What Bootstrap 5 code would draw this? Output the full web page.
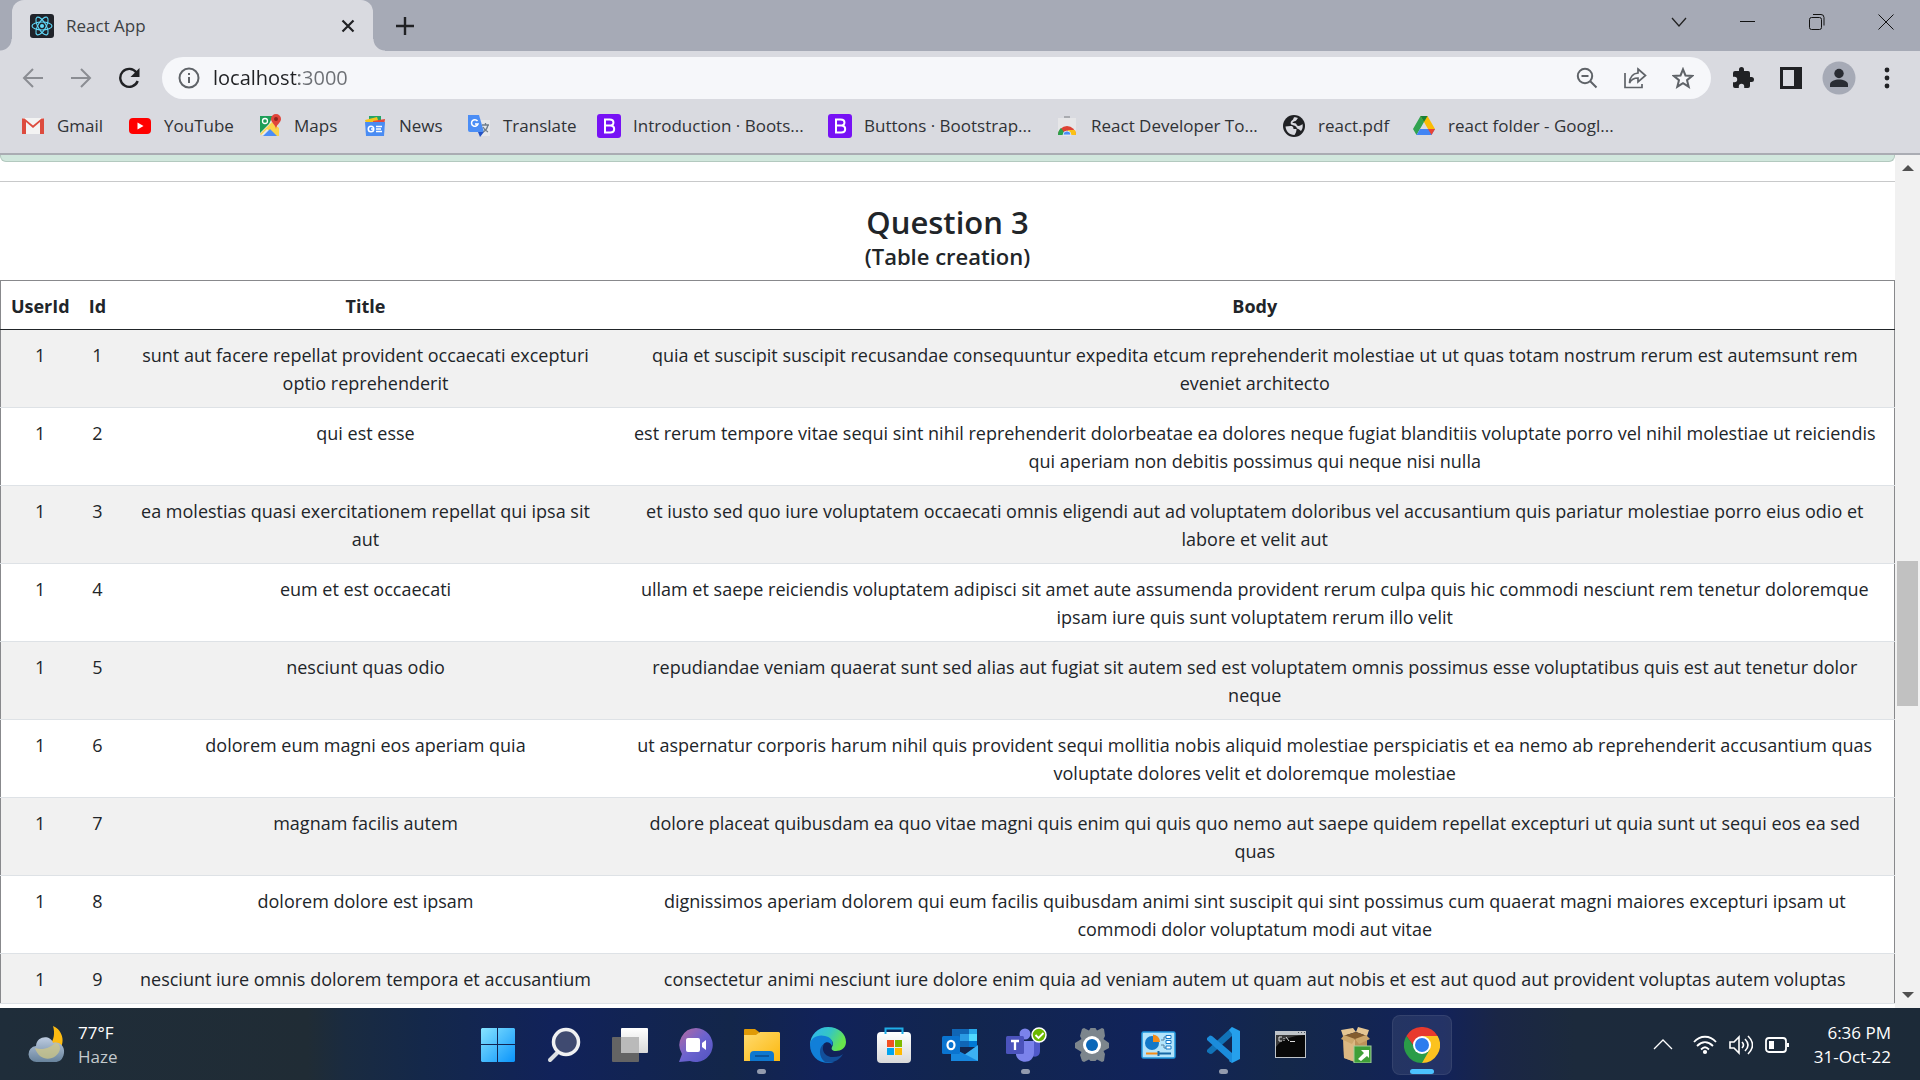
<!DOCTYPE html>
<html lang="en">
<head>
<meta charset="utf-8">
<meta name="viewport" content="width=device-width, initial-scale=1">
<title>React App</title>
<link href="https://cdn.jsdelivr.net/npm/bootstrap@5.3.0/dist/css/bootstrap.min.css" rel="stylesheet">
<style>
  body { font-family: "Open Sans", "Noto Sans", sans-serif; font-size: 18px; color: #212529; }
  svg { display: block; flex: none; }
  button { color: inherit; }
  .icon-btn { border: 0; background: none; padding: 0; display: flex; align-items: center; justify-content: center; flex: none; }

  /* tab strip */
  .tab-strip { background: #a6aab6; height: 51px; padding-left: 12px; }
  .browser-tab { background: #d9dae0; width: 361px; border-radius: 12px 12px 0 0; padding: 0 13px 0 18px; gap: 12px; font-size: 17px; position: relative; color: #3c4043; }
  .browser-tab::before, .browser-tab::after { content: ""; position: absolute; bottom: 0; width: 12px; height: 12px; }
  .browser-tab::before { left: -12px; background: radial-gradient(circle at 0 0, transparent 11px, #d9dae0 12px); }
  .browser-tab::after { right: -12px; background: radial-gradient(circle at 100% 0, transparent 11px, #d9dae0 12px); }
  .win-btn { width: 69px; height: 44px; }

  /* toolbar */
  .chrome-bar { background: #d9dae0; }
  .tool-row { height: 54px; padding: 0 9px; }
  .nav-btn { width: 48px; height: 42px; }
  .address { background: #f6f7fa; height: 42px; border-radius: 21px; margin: 0 8px 0 9px; padding: 0 4px 0 16px; }
  .address-input { border: 0; outline: 0; font-size: 20px; line-height: 30px; padding: 0; margin-left: 13px; color: transparent; background: linear-gradient(to right, #202124 86px, #6c6f74 86px); -webkit-background-clip: text; background-clip: text; }
  .ext-btn { width: 48px; height: 42px; }
  .bookmarks { display: grid; grid-template-columns: 107px 130px 105px 104px 130px 231px 227px 227px 130px auto 1fr; height: 50px; padding: 0 0 6px 21px; border-bottom: 2px solid #aaacb3; align-items: center; font-size: 17px; }
  .bookmarks a { display: flex; align-items: center; gap: 12px; color: #303236; text-decoration: none; white-space: nowrap; }

  /* page */
  .page-body { min-height: 0; }
  .prev-alert { height: 7px; background: #d1e7dd; border: 1px solid #b3c9bf; border-top: 0; border-radius: 0 0 6px 6px; }
  .rule { border-top: 1px solid #c8c9ca; margin-top: 19px; }
  .q-title { font-size: 31px; line-height: 39px; font-weight: 600; margin: 21px 0 0; }
  .q-sub { font-size: 22px; line-height: 28px; font-weight: 600; margin: 0 0 10px; }
  .posts { border: 1px solid #88898c; table-layout: fixed; margin: 0; text-align: center; color: #212529; line-height: 28px; }
  .posts > :not(caption) > * > * { padding: 11px 12px 10px; border-bottom: 1px solid #dee2e6; }
  .posts > :not(caption) > * > :nth-child(-n+2) { padding-left: 8px; padding-right: 8px; }
  .posts > tbody > tr:nth-child(odd) > * { background: #f1f1f1; box-shadow: none; }
  .posts > thead > tr > th { border-bottom-color: #212529; padding-bottom: 9px; }
  .c-user { width: 79px; } .c-id { width: 36px; } .c-title { width: 500px; }

  /* scrollbar */
  .scroller { width: 25px; background: #f1f1f1; }
  .scroller .arrow { height: 26px; width: 25px; }
  .scroller .thumb { width: 21px; background: #c1c1c1; flex: 145; }
  .track-above { flex: 380; }
  .track-below { flex: 276; }

  /* taskbar */
  .taskbar { height: 72px; padding-top: 2px; color: #fff; font-size: 17px; line-height: 24px; background: linear-gradient(to right, #1f2d3a 0, #202c35 16%, #1a2b40 18%, #14284a 22%, #11225a 29%, #13264a 38%, #11225a 43%, #12264e 50%, #11235a 60%, #14284a 67%, #12225a 75%, #1a2646 78%, #1c2a3c 82%, #1c2a38 100%); }
  .task-side { flex: 1 1 0; gap: 12px; }
  .task-left { padding-left: 28px; }
  .task-right { padding-right: 29px; }
  .task-apps { gap: 6px; }
  .clock { padding-left: 13px; }
  .haze { color: #c3c9cd; }
  .task-btn { width: 60px; height: 60px; border-radius: 8px; position: relative; }
  .task-btn.current { background: rgba(255,255,255,.08); border: 1px solid rgba(255,255,255,.07); }
  .task-btn.running::after, .task-btn.current::after { content: ""; position: absolute; bottom: 1px; width: 9px; height: 5px; border-radius: 3px; background: #939bae; }
  .task-btn.current::after { width: 24px; background: #4cc2ff; bottom: 0; }
</style>
</head>
<body class="vh-100 d-flex flex-column overflow-hidden">

<header>
  <div class="tab-strip d-flex align-items-stretch">
    <div class="browser-tab d-flex align-items-center">
      <svg width="24" height="24" viewBox="0 0 24 24"><rect width="24" height="24" rx="3" fill="#20232a"/><g fill="none" stroke="#61dafb" stroke-width="1.1"><ellipse cx="12" cy="12" rx="10" ry="4"/><ellipse cx="12" cy="12" rx="10" ry="4" transform="rotate(60 12 12)"/><ellipse cx="12" cy="12" rx="10" ry="4" transform="rotate(120 12 12)"/></g><circle cx="12" cy="12" r="2" fill="#61dafb"/></svg>
      <span class="flex-grow-1">React App</span>
      <button class="icon-btn" aria-label="Close tab"><svg width="24" height="24" viewBox="0 0 24 24" stroke="#202124" stroke-width="2.2"><path d="M6.500 6.500l11 11M17.500 6.500l-11 11"/></svg></button>
    </div>
    <button class="icon-btn ms-3 px-1" aria-label="New tab"><svg width="24" height="24" viewBox="0 0 24 24" stroke="#202124" stroke-width="2.400"><path d="M12 3v18M3 12h18"/></svg></button>
    <div class="ms-auto d-flex">
      <button class="icon-btn win-btn" aria-label="Search tabs"><svg width="18" height="18" viewBox="0 0 18 18" fill="none" stroke="#222" stroke-width="1.300"><path d="M2 5l7 8 7-8"/></svg></button>
      <button class="icon-btn win-btn" aria-label="Minimize"><svg width="16" height="16" viewBox="0 0 16 16" stroke="#111"><path d="M0 7.500h15"/></svg></button>
      <button class="icon-btn win-btn" aria-label="Restore"><svg width="16" height="16" viewBox="0 0 16 16" fill="none" stroke="#111"><rect x=".5" y="3.500" width="12" height="12" rx="2"/><path d="M4 .5h8a3 3 0 0 1 3 3v8"/></svg></button>
      <button class="icon-btn win-btn" aria-label="Close"><svg width="16" height="16" viewBox="0 0 16 16" stroke="#111"><path d="M.5 .5l15 15M15.500 .5l-15 15"/></svg></button>
    </div>
  </div>

  <div class="chrome-bar">
    <div class="tool-row d-flex align-items-center">
      <button class="icon-btn nav-btn" aria-label="Back"><svg width="22" height="22" viewBox="0 0 22 22" fill="none" stroke="#8b8d93" stroke-width="2"><path d="M21 11H3M11 2l-9 9 9 9"/></svg></button>
      <button class="icon-btn nav-btn" aria-label="Forward"><svg width="22" height="22" viewBox="0 0 22 22" fill="none" stroke="#8b8d93" stroke-width="2"><path d="M1 11h18M11 2l9 9-9 9"/></svg></button>
      <button class="icon-btn nav-btn" aria-label="Reload"><svg width="22" height="22" viewBox="0 0 22 22" fill="none" stroke="#202124" stroke-width="2.400"><path d="M18.500 5.500A9 9 0 1 0 19.700 14"/><path d="M21.500 1v9h-9z" fill="#202124" stroke="none"/></svg></button>
      <form class="address d-flex align-items-center flex-grow-1" onsubmit="return false">
        <svg width="22" height="22" viewBox="0 0 22 22" fill="none" stroke="#5f6368" stroke-width="2"><circle cx="11" cy="11" r="9.500"/><path d="M11 10v6M11 6v2"/></svg>
        <input id="url" class="address-input flex-grow-1" type="text" value="localhost:3000" aria-label="Address">
        <button class="icon-btn nav-btn" aria-label="Zoom"><svg width="22" height="22" viewBox="0 0 22 22" fill="none" stroke="#5f6368" stroke-width="2"><circle cx="9" cy="9" r="7.200"/><path d="M14 14l6.500 6.500M5.500 9h7"/></svg></button>
        <button class="icon-btn nav-btn" aria-label="Share"><svg width="24" height="22" viewBox="0 0 24 22" fill="none" stroke="#5f6368" stroke-width="1.700"><path d="M2 6v14.500h17V17"/><path d="M15 2l7.500 6.500L15 15v-4c-4 0-6.500 1-8.500 5 .3-6 3.500-9.500 8.500-10z"/></svg></button>
        <button class="icon-btn nav-btn" aria-label="Bookmark this tab"><svg width="22" height="22" viewBox="0 0 24 24" fill="none" stroke="#5f6368" stroke-width="2.200"><path d="M12 2.500l2.700 6.700 7.300.5-5.600 4.700 1.800 7.100-6.200-3.900-6.200 3.900 1.800-7.100L2 9.700l7.300-.5z"/></svg></button>
      </form>
      <button class="icon-btn ext-btn" aria-label="Extensions"><svg width="24" height="24" viewBox="0 0 24 24" fill="#202124"><path d="M20.500 11H19V7a2 2 0 0 0-2-2h-4V3.500a2.500 2.500 0 0 0-5 0V5H4a2 2 0 0 0-2 2v3.800h1.500a2.700 2.700 0 0 1 0 5.400H2V20a2 2 0 0 0 2 2h3.800v-1.500a2.700 2.700 0 0 1 5.400 0V22H17a2 2 0 0 0 2-2v-4h1.500a2.500 2.500 0 0 0 0-5z"/></svg></button>
      <button class="icon-btn ext-btn" aria-label="Side panel"><svg width="22" height="22" viewBox="0 0 22 22"><path fill="#202124" fill-rule="evenodd" d="M0 0h22v22H0zM3 3v16h11V3z"/></svg></button>
      <button class="icon-btn ext-btn" aria-label="Profile"><svg width="34" height="34" viewBox="0 0 34 34"><circle cx="17" cy="17" r="16.500" fill="#a6aab6"/><g fill="#292c33"><circle cx="17" cy="12.500" r="4.700"/><path d="M8 26v-2.500c0-3.500 5-5 9-5s9 1.500 9 5V26z"/></g></svg></button>
      <button class="icon-btn ext-btn" aria-label="Menu"><svg width="6" height="22" viewBox="0 0 6 22" fill="#202124"><circle cx="3" cy="3" r="2.400"/><circle cx="3" cy="11" r="2.400"/><circle cx="3" cy="19" r="2.400"/></svg></button>
    </div>

    <nav class="bookmarks" aria-label="Bookmarks">
      <a href="#"><svg width="24" height="24" viewBox="0 0 24 24"><path d="M2 4h20v16H2z" fill="#f3f3f3"/><path d="M1 4.500V20h4V8l7 6 7-6v12h4V4.500h-2.500L12 11.500 3.500 4.500z" fill="#dd4b3e"/></svg>Gmail</a>
      <a href="#"><svg width="24" height="24" viewBox="0 0 24 24"><rect x="1" y="4" width="22" height="16" rx="4" fill="#f00"/><path d="M9.500 8.500v7l6-3.500z" fill="#fff"/></svg>YouTube</a>
      <a href="#"><svg width="24" height="24" viewBox="0 0 24 24"><path d="M3 3h17v18H3z" fill="#e8e8e8"/><path d="M2 2h13l-4 8-9 9z" fill="#1e9e58"/><path d="M2 20L14 8l7 6v8h-4l-8-7-6 6z" fill="#fbd44b"/><path d="M5 22l7-7 7 7z" fill="#4b8df8"/><path d="M18 0a5 5 0 0 0-5 5c0 4 4.500 5 5 10 .5-5 5-6 5-10a5 5 0 0 0-5-5z" fill="#e0443a"/><circle cx="18" cy="5" r="2" fill="#8d241c"/><circle cx="7" cy="7" r="2.500" fill="none" stroke="#fff" stroke-width="1.300"/></svg>Maps</a>
      <a href="#"><svg width="24" height="24" viewBox="0 0 24 24"><path d="M6 2h12v7H6z" fill="#23a566"/><path d="M2 6l12-3 2 6H3z" fill="#f6c51b"/><path d="M10 7l12-2-1 7H10z" fill="#e04a3d"/><path d="M2 8h20l-1 14H3z" fill="#4a8cf3"/><circle cx="8" cy="15" r="2.700" fill="none" stroke="#fff" stroke-width="1.600"/><path d="M8 15h3M13 12.500h6M13 15h5M13 17.500h6" stroke="#fff" stroke-width="1.500"/></svg>News</a>
      <a href="#"><svg width="24" height="24" viewBox="0 0 24 24"><path d="M9 6h14v16H14z" fill="#e6e7ea"/><path d="M1 1h11l5 17H3a2 2 0 0 1-2-2z" fill="#4b8df5"/><path d="M11 18h6l-4 5z" fill="#2352c5"/><path d="M10.500 7A3.300 3.300 0 1 0 11 10H8" fill="none" stroke="#fff" stroke-width="1.500"/><path d="M15 11h7M18.500 9v2M21 11c-1 4-3 6-5 7M16 13c1 2 3 4 5 5" stroke="#6f7d8a" stroke-width="1.300" fill="none"/></svg>Translate</a>
      <a href="#"><svg width="24" height="24" viewBox="0 0 24 24"><rect width="24" height="24" rx="3" fill="#7711f5"/><path d="M8 5.500h4.700c5 0 5 6 0 6H8zm0 6h5.200c5.300 0 5.300 7 0 7H8z" fill="none" stroke="#fff" stroke-width="2"/></svg>Introduction · Boots...</a>
      <a href="#"><svg width="24" height="24" viewBox="0 0 24 24"><rect width="24" height="24" rx="3" fill="#7711f5"/><path d="M8 5.500h4.700c5 0 5 6 0 6H8zm0 6h5.200c5.300 0 5.300 7 0 7H8z" fill="none" stroke="#fff" stroke-width="2"/></svg>Buttons · Bootstrap...</a>
      <a href="#"><svg width="24" height="24" viewBox="0 0 24 24"><path d="M9 2h6v2H9z" fill="#a9abb0"/><path d="M3 4h18v17H3z" fill="#e6e6e8"/><path d="M3 21a9 9 0 0 1 18 0z" fill="#dd4334"/><path d="M3 21a9 9 0 0 1 3-7l5 7z" fill="#2ba24c"/><path d="M21 21a9 9 0 0 0-1-5h-7v5z" fill="#fbc116"/><path d="M8 21a4 4 0 0 1 8 0z" fill="#4b8df5" stroke="#fff" stroke-width=".7"/></svg>React Developer To...</a>
      <a href="#"><svg width="24" height="24" viewBox="0 0 24 24"><circle cx="12" cy="12" r="11" fill="#202124"/><path d="M3.500 12.500l5-.5c3 0 3 2 3 3h3c0 3-1 4-2 6C7 21 4 17 3.500 12.500zM12 3.300c2 0 3 .2 4 .7-1 1-1 2-2.500 3-1.500.5-3 .5-3 2 2 0 4 0 4.500 2.500 2 1 4 0 5.500-1.500.6 3 0 5-1.500 7-1.500-1-2-2-4-2.500-1-3-3-3-6-4-1-3 1-4 2-5z" fill="#d9dae0"/></svg>react.pdf</a>
      <a href="#"><svg width="24" height="24" viewBox="0 0 24 24"><path d="M8.500 2h7L12 8 4.500 21 1 15z" fill="#31a350"/><path d="M8.500 2h7L23 15h-7z" fill="#fbbc04"/><path d="M8.500 2h7L12 8z" fill="#188038"/><path d="M8 15h15l-3.500 6h-15z" fill="#4285f4"/><path d="M16 15h7l-3.500 6z" fill="#ea4335"/></svg>react folder - Googl...</a>
    </nav>
  </div>
</header>

<div class="page-body d-flex flex-grow-1 overflow-hidden">
  <main class="flex-grow-1 overflow-hidden">
    <div class="prev-alert"></div>
    <div class="rule"></div>
    <h3 class="q-title text-center">Question 3</h3>
    <h5 class="q-sub text-center">(Table creation)</h5>
    <table class="table table-striped posts">
      <colgroup><col class="c-user"><col class="c-id"><col class="c-title"><col></colgroup>
      <thead><tr><th scope="col">UserId</th><th scope="col">Id</th><th scope="col">Title</th><th scope="col">Body</th></tr></thead>
      <tbody>
        <tr><td>1</td><td>1</td><td>sunt aut facere repellat provident occaecati excepturi optio reprehenderit</td><td>quia et suscipit suscipit recusandae consequuntur expedita etcum reprehenderit molestiae ut ut quas totam nostrum rerum est autemsunt rem eveniet architecto</td></tr>
        <tr><td>1</td><td>2</td><td>qui est esse</td><td>est rerum tempore vitae sequi sint nihil reprehenderit dolorbeatae ea dolores neque fugiat blanditiis voluptate porro vel nihil molestiae ut reiciendis qui aperiam non debitis possimus qui neque nisi nulla</td></tr>
        <tr><td>1</td><td>3</td><td>ea molestias quasi exercitationem repellat qui ipsa sit aut</td><td>et iusto sed quo iure voluptatem occaecati omnis eligendi aut ad voluptatem doloribus vel accusantium quis pariatur molestiae porro eius odio et labore et velit aut</td></tr>
        <tr><td>1</td><td>4</td><td>eum et est occaecati</td><td>ullam et saepe reiciendis voluptatem adipisci sit amet aute assumenda provident rerum culpa quis hic commodi nesciunt rem tenetur doloremque ipsam iure quis sunt voluptatem rerum illo velit</td></tr>
        <tr><td>1</td><td>5</td><td>nesciunt quas odio</td><td>repudiandae veniam quaerat sunt sed alias aut fugiat sit autem sed est voluptatem omnis possimus esse voluptatibus quis est aut tenetur dolor neque</td></tr>
        <tr><td>1</td><td>6</td><td>dolorem eum magni eos aperiam quia</td><td>ut aspernatur corporis harum nihil quis provident sequi mollitia nobis aliquid molestiae perspiciatis et ea nemo ab reprehenderit accusantium quas voluptate dolores velit et doloremque molestiae</td></tr>
        <tr><td>1</td><td>7</td><td>magnam facilis autem</td><td>dolore placeat quibusdam ea quo vitae magni quis enim qui quis quo nemo aut saepe quidem repellat excepturi ut quia sunt ut sequi eos ea sed quas</td></tr>
        <tr><td>1</td><td>8</td><td>dolorem dolore est ipsam</td><td>dignissimos aperiam dolorem qui eum facilis quibusdam animi sint suscipit qui sint possimus cum quaerat magni maiores excepturi ipsam ut commodi dolor voluptatum modi aut vitae</td></tr>
        <tr><td>1</td><td>9</td><td>nesciunt iure omnis dolorem tempora et accusantium</td><td>consectetur animi nesciunt iure dolore enim quia ad veniam autem ut quam aut nobis et est aut quod aut provident voluptas autem voluptas</td></tr>
      </tbody>
    </table>
  </main>
  <div class="scroller d-flex flex-column align-items-center flex-shrink-0">
    <button class="icon-btn arrow" aria-label="Scroll up"><svg width="12" height="6" viewBox="0 0 12 6" fill="#505050"><path d="M6 0l6 6H0z"/></svg></button>
    <div class="track-above"></div>
    <div class="thumb"></div>
    <div class="track-below"></div>
    <button class="icon-btn arrow" aria-label="Scroll down"><svg width="12" height="6" viewBox="0 0 12 6" fill="#505050"><path d="M6 6L0 0h12z"/></svg></button>
  </div>
</div>

<footer class="taskbar d-flex align-items-center flex-shrink-0">
  <svg width="0" height="0" class="position-absolute" aria-hidden="true"><defs>
    <linearGradient id="gWin" x2="1" y2="1"><stop stop-color="#87e4ff"/><stop offset="1" stop-color="#0a94fb"/></linearGradient>
    <linearGradient id="gChat" x2="1" y2="1"><stop offset=".1" stop-color="#a968a8"/><stop offset=".5" stop-color="#6c63cf"/><stop offset="1" stop-color="#5052c0"/></linearGradient>
    <linearGradient id="gFold" x2="1" y2="1"><stop stop-color="#ffdb70"/><stop offset="1" stop-color="#fcb80e"/></linearGradient>
    <linearGradient id="gEdgeA" x2="1" y2=".4"><stop stop-color="#2fb4f4"/><stop offset=".55" stop-color="#35c6c4"/><stop offset="1" stop-color="#67e64b"/></linearGradient>
    <linearGradient id="gGrey" x2="0" y2="1"><stop stop-color="#fff"/><stop offset="1" stop-color="#d9d9d9"/></linearGradient>
    <linearGradient id="gCloud" x2="0" y2="1"><stop stop-color="#bccbe0"/><stop offset="1" stop-color="#68839c"/></linearGradient>
  </defs></svg>
  <div class="task-side task-left d-flex align-items-center">
    <svg width="38" height="40" viewBox="0 0 38 40"><path d="M25 1c8 3 13 14 7 23s-22 11-26 2c10 2 24-8 19-25z" fill="#fdbb12"/><path d="M9 37a8 8 0 0 1-1-16c1-11 15-11 17-3 6-2 12 3 11 10s-5 9-9 9z" fill="url(#gCloud)"/><path d="M7 23c8 3 16-1 20-5 4 0 5 3 5 6-2 11-20 15-25-1z" fill="#cfc787" opacity=".75"/></svg>
    <div><div>77°F</div><div class="haze">Haze</div></div>
  </div>
  <div class="task-apps d-flex">
    <button class="icon-btn task-btn" aria-label="Start"><svg width="36" height="36" viewBox="0 0 36 36" fill="url(#gWin)"><path d="M2 1h15v16H1V2zM18 1h16l1 1v15H18zM1 18h16v17H2l-1-1zM18 18h17v16l-1 1H18z"/></svg></button>
    <button class="icon-btn task-btn" aria-label="Search"><svg width="36" height="36" viewBox="0 0 36 36"><path d="M12 25l-8 8" stroke="#dcdfe2" stroke-width="4" stroke-linecap="round"/><circle cx="20" cy="15" r="12.500" fill="#3f4a70" stroke="#f0f1f2" stroke-width="3.500"/></svg></button>
    <button class="icon-btn task-btn" aria-label="Task view"><svg width="36" height="36" viewBox="0 0 36 36"><rect y="10" width="27" height="25" rx="1" fill="#646464"/><rect x="9" y="1" width="27" height="25" rx="1" fill="url(#gGrey)"/><path d="M9 10h18v16H9z" fill="#bababa"/></svg></button>
    <button class="icon-btn task-btn" aria-label="Chat"><svg width="36" height="36" viewBox="0 0 36 36"><path d="M18 1a17 17 0 1 1-6 33L1 35l3-8A17 17 0 0 1 18 1z" fill="url(#gChat)"/><rect x="8" y="11" width="14" height="14" rx="2" fill="#fff"/><path d="M24 16l4-3v10l-4-3z" fill="#fff"/></svg></button>
    <button class="icon-btn task-btn running" aria-label="File Explorer"><svg width="36" height="36" viewBox="0 0 36 36"><path d="M0 3q0-1 1-1h10l4 3v5H0z" fill="#e09a06"/><path d="M0 8h12l4-3h19l1 1v28H0z" fill="url(#gFold)"/><path d="M6 34v-6a4 4 0 0 1 4-4h16a4 4 0 0 1 4 4v6z" fill="#0f78cf"/><path d="M11 29h14" stroke="#0b4b8c" stroke-width="1.500"/></svg></button>
    <button class="icon-btn task-btn" aria-label="Edge"><svg width="36" height="36" viewBox="0 0 36 36"><path d="M0 18A18 18 0 0 1 18 0c11 0 18 7 18 15 0 6-5 9-10 9-4 0-5-2-4-4 3-5-1-9-7-9C7 11 2 13 0 18z" fill="url(#gEdgeA)"/><path d="M0 18c0-7 8-11 15-9 6 1 9 6 7 10-2-6-10-5-10 3 0 6 5 12 12 13C11 39 0 30 0 18z" fill="#117fd8"/><path d="M14 17c-3 5 0 13 9 13 5 0 8-1 10-3-4 7-12 10-18 8-6-4-7-15-1-18z" fill="#124f9a"/></svg></button>
    <button class="icon-btn task-btn" aria-label="Microsoft Store"><svg width="36" height="36" viewBox="0 0 36 36"><rect x="1" y="5" width="34" height="31" rx="4" fill="url(#gGrey)"/><path d="M9.500 7V1.500h17V7" fill="none" stroke="#1faee8" stroke-width="2"/><path d="M11 13h7v7h-7z" fill="#f25022"/><path d="M19 13h7v7h-7z" fill="#7fba00"/><path d="M11 21h7v7h-7z" fill="#00a4ef"/><path d="M19 21h7v7h-7z" fill="#ffb900"/></svg></button>
    <button class="icon-btn task-btn" aria-label="Outlook"><svg width="36" height="36" viewBox="0 0 36 36"><path d="M10 2h25v18H10z" fill="#1066b5"/><path d="M18 7h9v7h-9z" fill="#2a9be4"/><path d="M27 7h8v7h-8z" fill="#50d9ff"/><path d="M27 2h8v5h-8z" fill="#28a8ea"/><path d="M27 14h8v6h-8z" fill="#0078d4"/><path d="M9 20l13 8 14-10v16H9z" fill="#3cb0f2"/><path d="M9 20l27 14H9z" fill="#1787de"/><rect y="9" width="18" height="18" rx="1.500" fill="#0a74d0"/><ellipse cx="9" cy="18" rx="3.500" ry="4.200" fill="none" stroke="#fff" stroke-width="2.200"/></svg></button>
    <button class="icon-btn task-btn running" aria-label="Teams"><svg width="42" height="36" viewBox="0 0 42 36"><circle cx="20" cy="7" r="5.500" fill="#7b83eb"/><path d="M24 14h11v10c0 6-6 7-9 4z" fill="#5059c9"/><path d="M11 14h18v11c0 13-16 12-18 3z" fill="#7b83eb"/><rect x="1" y="9" width="18" height="18" rx="1.500" fill="#4b53bc"/><path d="M6 14h8M10 14v9" stroke="#fff" stroke-width="2.300"/><circle cx="34" cy="8" r="7" fill="#6bb700" stroke="#fff" stroke-width="1.500"/><path d="M30.500 8l3 3 5-5" fill="none" stroke="#fff" stroke-width="1.800"/></svg></button>
    <button class="icon-btn task-btn" aria-label="Settings"><svg width="36" height="36" viewBox="0 0 36 36"><path d="M8 2l2-1 5 2.500 1.500-2.500h5l1.500 2.500L28 1l2 1 1 7-1.500 3 5.500 4v5l-5.500 3 1.500 3-1 7-2 1-5-2.500-1.500 1.500h-5L15 32.500 10 35l-2-1-2-6 1.500-3L1 21v-5l6.500-4L6 9z" fill="#7d868d"/><circle cx="18" cy="18" r="9" fill="#fff"/><circle cx="18" cy="18" r="6" fill="#0b67b8"/></svg></button>
    <button class="icon-btn task-btn" aria-label="Control Panel"><svg width="36" height="36" viewBox="0 0 36 36"><rect x="2" y="5" width="33" height="26" rx="1.500" fill="#b3e4fb" stroke="#1f97de" stroke-width="1.500"/><circle cx="12" cy="16" r="7" fill="#1378c8"/><path d="M13 15V7.500a7.500 7.500 0 0 1 7 7.500z" fill="#f48c18"/><path d="M21 13h3V10h3M21 18h3v3h3" fill="none" stroke="#567f9d"/><path d="M26 8.500h5v3h-5zM26 13.500h5v3h-5zM26 19h5v3h-5z" fill="#fff" stroke="#1378c8"/><path d="M6 26.500h12" stroke="#f48c18" stroke-width="2"/><path d="M18 26.500h13M18.500 24v5" stroke="#1668a6" stroke-width="2"/></svg></button>
    <button class="icon-btn task-btn running" aria-label="Visual Studio Code"><svg width="36" height="36" viewBox="0 0 36 36"><path d="M1 23v2l3 2 2-.3L26 9V0L2 22z" fill="#1173b8"/><path d="M26 0l8 4v28l-8 4-3-2 3-4V7l-3-4z" fill="#25a0ec"/><path d="M1 11l3-2.500L6 9l20 17v9.500L1 13z" fill="#1b8cdb"/></svg></button>
    <button class="icon-btn task-btn" aria-label="Command Prompt"><svg width="36" height="36" viewBox="0 0 36 36"><path d="M3 4h31v27H3z" fill="#bfc4c9"/><path d="M4 8h29v22H4z" fill="#080808"/><path d="M4 8h29c-15 1-24 5-29 12z" fill="#3a3a3a"/><path d="M26 5.500h1M29 5.500h1M32 5.500h1" stroke="#4b5560"/><path d="M10 10H7v4h3M12 11v1M12 13v1M14 10l3 4M18 14.500h5" fill="none" stroke="#ddd"/></svg></button>
    <button class="icon-btn task-btn" aria-label="Package installer"><svg width="36" height="36" viewBox="0 0 36 36"><path d="M5 8l12 4 12-4v24l-12 3L6 31z" fill="#bd915a"/><path d="M5 8l12 4v23L6 31z" fill="#dcb883"/><path d="M3 3l12-2 3 4-13 4zM31 3L20 0l-2 5 11 4z" fill="#e4c592"/><path d="M5 9l13-4 11 4-12 4z" fill="#835c2e"/><path d="M3 12l3-4 11 4-3 5zM32 12l-4-4-11 4 4 5z" fill="#cda76c"/><rect x="16" y="19" width="17" height="17" fill="#3f9f38" stroke="#a3ce9c"/><path d="M20 32l6-6-3-3h8v8l-2-2-6 5z" fill="#fff"/></svg></button>
    <button class="icon-btn task-btn current" aria-label="Chrome"><svg width="36" height="36" viewBox="0 0 36 36"><path d="M2.400 9A18 18 0 0 1 33.600 9L27 18H9z" fill="#e8392d"/><path d="M33.600 9A18 18 0 0 1 18 36l1-10 7-8-8-9z" fill="#fcc21f"/><path d="M2.400 9A18 18 0 0 0 18 36l7.500-13L18 18h-9z" fill="#2a9c48"/><circle cx="18" cy="18" r="9" fill="#fff"/><circle cx="18" cy="18" r="7" fill="#2d7cee"/></svg></button>
  </div>
  <div class="task-side task-right d-flex align-items-center justify-content-end">
    <button class="icon-btn me-2" aria-label="Show hidden icons"><svg width="20" height="20" viewBox="0 0 20 20" fill="none" stroke="#fff" stroke-width="1.300"><path d="M1 14l9-9 9 9"/></svg></button>
    <svg width="24" height="20" viewBox="0 0 24 20" fill="none" stroke="#fff" stroke-width="1.800"><path d="M1 7c6-7 16-7 22 0M4 11c5-5 11-5 16 0M8 14.500c3-3 5-3 8 0"/><circle cx="12" cy="17" r="1.200" fill="#fff"/></svg>
    <svg width="24" height="20" viewBox="0 0 24 20" fill="none" stroke="#fff" stroke-width="1.600"><path d="M1 7h4l5-5v16l-5-5H1zM13 7c2 2 2 4 0 6M16 4c4 4 4 8 0 12M19 1c6 6 6 12 0 18"/></svg>
    <svg width="24" height="20" viewBox="0 0 24 20" fill="none" stroke="#fff" stroke-width="1.800"><rect x="1" y="3" width="20" height="14" rx="3"/><path d="M4 6h5v8H4z" fill="#fff" stroke="none"/><path d="M23 8v4" stroke-width="2"/></svg>
    <div class="clock text-end"><div>6:36 PM</div><div>31-Oct-22</div></div>
  </div>
</footer>

<script src="https://cdn.jsdelivr.net/npm/bootstrap@5.3.0/dist/js/bootstrap.bundle.min.js"></script>
</body>
</html>
